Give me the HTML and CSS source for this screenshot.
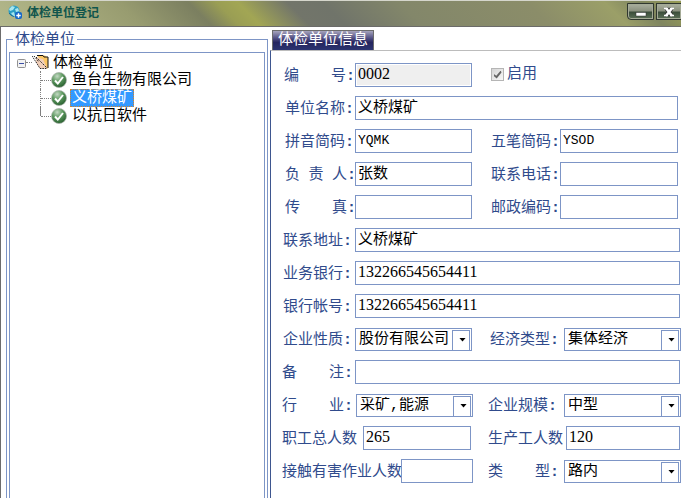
FILE: index.html
```html
<!DOCTYPE html>
<html lang="zh-CN">
<head>
<meta charset="utf-8">
<title>体检单位登记</title>
<link rel="stylesheet" href="styles.css">
</head>
<body>
<svg class="defs" aria-hidden="true">
  <defs>
    <radialGradient id="ball" cx="0.38" cy="0.25" r="0.8">
      <stop offset="0" stop-color="#c3d8c3"/>
      <stop offset="0.45" stop-color="#5f9a61"/>
      <stop offset="1" stop-color="#245c2b"/>
    </radialGradient>
    <symbol id="check" viewBox="0 0 16 16">
      <circle cx="8" cy="8" r="7.5" fill="url(#ball)" stroke="#a9b0a9" stroke-width="0.7"/>
      <path d="M4 8.5 L6.8 11.5 L12 5" fill="none" stroke="#fff" stroke-width="2"/>
    </symbol>
  </defs>
</svg>
<div class="window">
  <header class="titlebar">
    <svg class="app-icon" viewBox="0 0 14 14" aria-hidden="true">
      <circle cx="6" cy="6" r="5.5" fill="#2d9fc4"/>
      <path d="M1 4 L4 1 L7 2 L5 5 L2 6 Z M7 4 L10 3 L11 6 L8 7 Z M3 8 L6 7 L7 11 L5 11 Z" fill="#a8e5ee"/>
      <path d="M1 8 Q3 11 6 11.5" fill="none" stroke="#176d98"/>
      <rect x="7" y="7" width="7" height="7" rx="2" fill="#1668c8"/>
      <path d="M10.5 8.3 V12.7 M8.3 10.5 H12.7" stroke="#fff" stroke-width="1.4"/>
    </svg>
    <h1 class="title">体检单位登记</h1>
    <div class="window-buttons">
      <button class="win-btn" type="button" aria-label="最小化"><svg viewBox="0 0 12 10"><rect x="1" y="5.5" width="10" height="3.5" fill="#fff" stroke="#333" stroke-width="0.5"/></svg></button>
      <button class="win-btn" type="button" aria-label="关闭"><svg viewBox="0 0 12 10"><path d="M3 1 L9 9 M9 1 L3 9" stroke="#333" stroke-width="4"/><path d="M3 1 L9 9 M9 1 L3 9" stroke="#fff" stroke-width="2.6"/><path d="M1 1.500 H5 M7 1.500 H11 M1 8.500 H5 M7 8.500 H11" stroke="#fff" stroke-width="1.4"/></svg></button>
    </div>
  </header>
  <main class="content">
    <fieldset class="group">
      <legend>体检单位</legend>
      <div class="tree">
        <div class="node root">
          <svg class="expander" viewBox="0 0 9 9" aria-hidden="true"><rect x="0.5" y="0.5" width="8" height="8" rx="1" fill="#f2f2f2" stroke="#919191"/><path d="M2 4.500 H7" stroke="#3b4fa5"/></svg>
          <span class="dots"></span>
          <svg class="folder" viewBox="0 0 17 16" aria-hidden="true">
            <path d="M5 1.500 H13 L16 4 V15 L8 6 Z" fill="#fbc663"/>
            <path d="M4 3 L11 5 L15 14.500 H8 L4 8 Z" fill="#f1cfb9"/>
            <path d="M5 1.500 H11 L12 3 H16 V14" fill="none" stroke="#111"/>
            <path d="M0 2 L4 8 M2 2 L7 8 M4 3 L15 14 M4 8 L8 14.500 H15" fill="none" stroke="#222" stroke-dasharray="1.500 1"/>
          </svg>
          <span class="node-text">体检单位</span>
        </div>
        <ul class="children">
          <li class="node"><svg class="check"><use href="#check"/></svg><span class="node-text">鱼台生物有限公司</span></li>
          <li class="node"><svg class="check"><use href="#check"/></svg><span class="node-text selected">义桥煤矿</span></li>
          <li class="node"><svg class="check"><use href="#check"/></svg><span class="node-text">以抗日软件</span></li>
        </ul>
      </div>
    </fieldset>
    <section class="details">
      <button class="tab" type="button">体检单位信息</button>
      <form class="form">
        <div class="row basic code-row">
          <label for="code"><span class="spread"><span>编</span><span>号</span></span><b>:</b></label>
          <input class="latin digits" id="code" type="text" value="0002" readonly>
          <div class="enable"><input id="enabled" type="checkbox" checked><label for="enabled">启用</label></div>
        </div>
        <div class="row basic">
          <label for="name">单位名称<b>:</b></label>
          <input class="wide" id="name" type="text" value="义桥煤矿">
        </div>
        <div class="row basic">
          <label for="pinyin">拼音简码<b>:</b></label>
          <input class="latin" id="pinyin" type="text" value="YQMK">
          <label class="second" for="wubi">五笔简码<b>:</b></label>
          <input class="latin" id="wubi" type="text" value="YSOD">
        </div>
        <div class="row basic">
          <label for="head"><span class="spread"><span>负</span><span>责</span><span>人</span></span><b>:</b></label>
          <input id="head" type="text" value="张数">
          <label class="second" for="phone">联系电话<b>:</b></label>
          <input id="phone" type="text">
        </div>
        <div class="row basic">
          <label for="fax"><span class="spread"><span>传</span><span>真</span></span><b>:</b></label>
          <input id="fax" type="text">
          <label class="second" for="zip">邮政编码<b>:</b></label>
          <input id="zip" type="text">
        </div>
        <div class="row bank">
          <label for="address">联系地址<b>:</b></label>
          <input class="wide" id="address" type="text" value="义桥煤矿">
        </div>
        <div class="row bank">
          <label for="bank">业务银行<b>:</b></label>
          <input class="wide latin digits" id="bank" type="text" value="132266545654411">
        </div>
        <div class="row bank">
          <label for="account">银行帐号<b>:</b></label>
          <input class="wide latin digits" id="account" type="text" value="132266545654411">
        </div>
        <div class="row choice bank">
          <label for="nature">企业性质<b>:</b></label>
          <span class="combo"><select id="nature"><option>股份有限公司</option></select></span>
          <label class="second" for="economy">经济类型<b>:</b></label>
          <span class="combo"><select id="economy"><option>集体经济</option></select></span>
        </div>
        <div class="row note">
          <label for="note"><span class="spread"><span>备</span><span>注</span></span><b>:</b></label>
          <input class="wide" id="note" type="text">
        </div>
        <div class="row choice industry">
          <label for="industry"><span class="spread"><span>行</span><span>业</span></span><b>:</b></label>
          <span class="combo"><select id="industry"><option>采矿,能源</option></select></span>
          <label class="second" for="scale">企业规模<b>:</b></label>
          <span class="combo"><select id="scale"><option>中型</option></select></span>
        </div>
        <div class="row staff">
          <label for="staff">职工总人数</label>
          <input class="latin digits" id="staff" type="text" value="265">
          <label class="second" for="workers">生产工人数</label>
          <input class="latin digits" id="workers" type="text" value="120">
        </div>
        <div class="row hazard">
          <label for="hazard">接触有害作业人数</label>
          <input id="hazard" type="text">
          <label class="second" for="kind"><span class="spread"><span>类</span><span>型</span></span><b>:</b></label>
          <span class="combo"><select id="kind"><option>路内</option></select></span>
        </div>
      </form>
    </section>
  </main>
</div>
</body>
</html>
```
FILE: styles.css
```css
* { box-sizing: border-box; }

body {
  margin: 0;
  background: #fff;
  color: #000;
  font: 15px/18px "Liberation Mono", "Noto Sans CJK SC", sans-serif;
  overflow: hidden;
}

.defs {
  display: block;
  width: 0;
  height: 0;
}

.window {
  display: flex;
  flex-direction: column;
  min-height: 100vh;
  border-left: 1px solid #6c6c6c;
}

/* Title bar */
.titlebar {
  display: flex;
  align-items: flex-start;
  height: 27px;
  padding-left: 8px;
  margin-left: -1px;
  border-top: 1px solid #d5d6cc;
  border-bottom: 1px solid #6b6b69;
  background: linear-gradient(45deg, #b3b88c 0%, #a9ad7f 9%, #989c70 20%, #7b7f60 30%, #9a9e54 34%, #a2a654 37%, #72756a 44%, #70746a 49%, #83876a 60%, #8b8d69 78%, #9b9f68 89%, #7f855f 94%, #989c54 100%);
}

.app-icon {
  width: 14px;
  height: 14px;
  margin-top: 4px;
}

.title {
  margin: 2px 0 0 5px;
  color: #10554c;
  font: bold 12px/18px "Noto Sans CJK SC", sans-serif;
}

.window-buttons {
  display: flex;
  gap: 2px;
  margin: 2px 0 0 auto;
}

.win-btn {
  display: flex;
  align-items: center;
  justify-content: center;
  width: 27px;
  height: 17px;
  padding: 0;
  border: 1px solid #30372f;
  border-radius: 0 0 0 4px;
  background: linear-gradient(#abb09f, #8b917f 45%, #3c4e3b 55%, #5c7057);
  box-shadow: inset 0 0 0 1px #a4aa96;
}

.win-btn + .win-btn {
  width: 25px;
  border-right: 0;
  border-radius: 0;
}

.win-btn svg {
  width: 12px;
  height: 10px;
}

.content {
  display: flex;
  flex: 1;
}

/* Unit tree */
.group {
  display: flex;
  flex: 0 0 262px;
  min-width: 0;
  margin: 3px 2px 0 5px;
  padding: 4px 2px 0;
  border: 1px solid #7d95c6;
  border-bottom: 0;
  color: #304b8c;
}

.group legend {
  margin-left: 4px;
  padding: 3px 2px 0;
  line-height: 15px;
}

.tree {
  flex: 1;
  padding-left: 7px;
  border: 1px solid #7d95c6;
  border-bottom: 0;
  color: #000;
}

.node {
  display: flex;
  align-items: center;
  height: 18px;
}

.expander {
  width: 9px;
  height: 9px;
  margin-top: 3px;
}

.dots {
  width: 6px;
  border-top: 1px dotted #808080;
}

.folder {
  width: 17px;
  height: 16px;
}

.node-text { padding-top: 3px; }

.root .node-text { margin-left: 4px; }

.children {
  margin: 0 0 0 23px;
  padding: 0;
  list-style: none;
}

.children .node {
  border-left: 1px dotted #808080;
}

.children .node::before {
  content: "";
  width: 10px;
  border-top: 1px dotted #808080;
}

.children .node:last-child {
  border-image: linear-gradient(#808080 50%, transparent 50%) 1;
}

.check {
  width: 16px;
  height: 16px;
  margin-right: 3px;
}

.children .node-text {
  height: 18px;
  padding: 1px 2px 0;
  line-height: 18px;
}

.children .selected {
  border: 1px dotted #d98324;
  padding: 0 1px;
  background: #3399ff;
  color: #fff;
}

/* Detail panel */
.details {
  flex: 1;
  min-width: 0;
  padding-top: 3px;
}

.tab {
  display: block;
  height: 20px;
  margin-left: 2px;
  padding: 1px 5px 0;
  border: 1px solid #6c6c6c;
  border-bottom: 0;
  background: linear-gradient(#a6a4bd, #4d4b80 40%, #25255f 60%, #2b3470);
  color: #fff;
  font: inherit;
  line-height: 18px;
}

.form {
  display: flex;
  flex-direction: column;
  gap: 9px;
  min-height: 448px;
  padding: 12px 0 0 11px;
  border-top: 1px solid #bcbcbc;
  border-left: 1px solid #3e568f;
}

.row {
  display: grid;
  grid-template-columns: 73px 117px 19px 69px 1fr;
  align-items: center;
  height: 24px;
  color: #304b8c;
}

.basic { padding-right: 3px; }
.basic > label:first-child { padding-left: 3px; }
.code-row > label:first-child { padding-left: 2px; }
.bank, .note { padding-right: 1px; }
.bank > label:first-child { padding-left: 1px; }

.choice {
  grid-template-columns: 73px 117px 18px 74px 1fr;
  padding-right: 0;
}

.industry { grid-template-columns: 74px 117px 15px 76px 1fr; }

.staff {
  grid-template-columns: 81px 108px 17px 78px 1fr;
  padding-right: 1px;
}

.hazard { grid-template-columns: 119px 72px 15px 76px 1fr; }

.row > label {
  padding-top: 3px;
  white-space: nowrap;
}

.second { grid-column: 4; }
.wide { grid-column: 2 / -1; }

.spread {
  display: inline-flex;
  justify-content: space-between;
  width: 62px;
}

.row input[type="text"],
.row select {
  width: 100%;
  min-width: 0;
  height: 24px;
  margin: 0;
  padding: 0 2px 4px;
  border: 1px solid #7d95c6;
  border-radius: 0;
  outline: 0;
  background: #fff;
  color: #000;
  font: inherit;
}

.row input.latin {
  font-size: 13px;
  padding-bottom: 2px;
}

.row input.digits {
  font-family: "Liberation Serif", serif;
  font-size: 16px;
}

.row input[readonly] {
  background: #efefef;
  box-shadow: inset 0 0 0 1px #fff;
}

.enable {
  display: flex;
  grid-column: 4;
  gap: 3px;
}

.enable input {
  display: grid;
  width: 13px;
  height: 13px;
  margin: 2px 0 0;
  border: 1px solid #b5b5b5;
  background: linear-gradient(135deg, #d5d5d5, #f8f8f8);
  appearance: none;
}

.enable input::before {
  content: "";
  place-self: center;
  width: 8px;
  height: 8px;
  background: #666;
  clip-path: polygon(0 40%, 35% 65%, 90% 0, 100% 25%, 40% 100%, 0 65%);
}

.combo {
  position: relative;
  display: block;
}

.row .combo select {
  display: block;
  height: 23px;
  padding: 1px 20px 0 3px;
  appearance: none;
}

.combo::before,
.combo::after {
  content: "";
  position: absolute;
  pointer-events: none;
}

.combo::before {
  top: 2px;
  right: 2px;
  width: 16px;
  height: 19px;
  border: 1px solid #7d95c6;
}

.combo::after {
  top: 10px;
  right: 6px;
  width: 7px;
  height: 4px;
  background: #000;
  clip-path: polygon(0 0, 100% 0, 50% 100%);
}
```
